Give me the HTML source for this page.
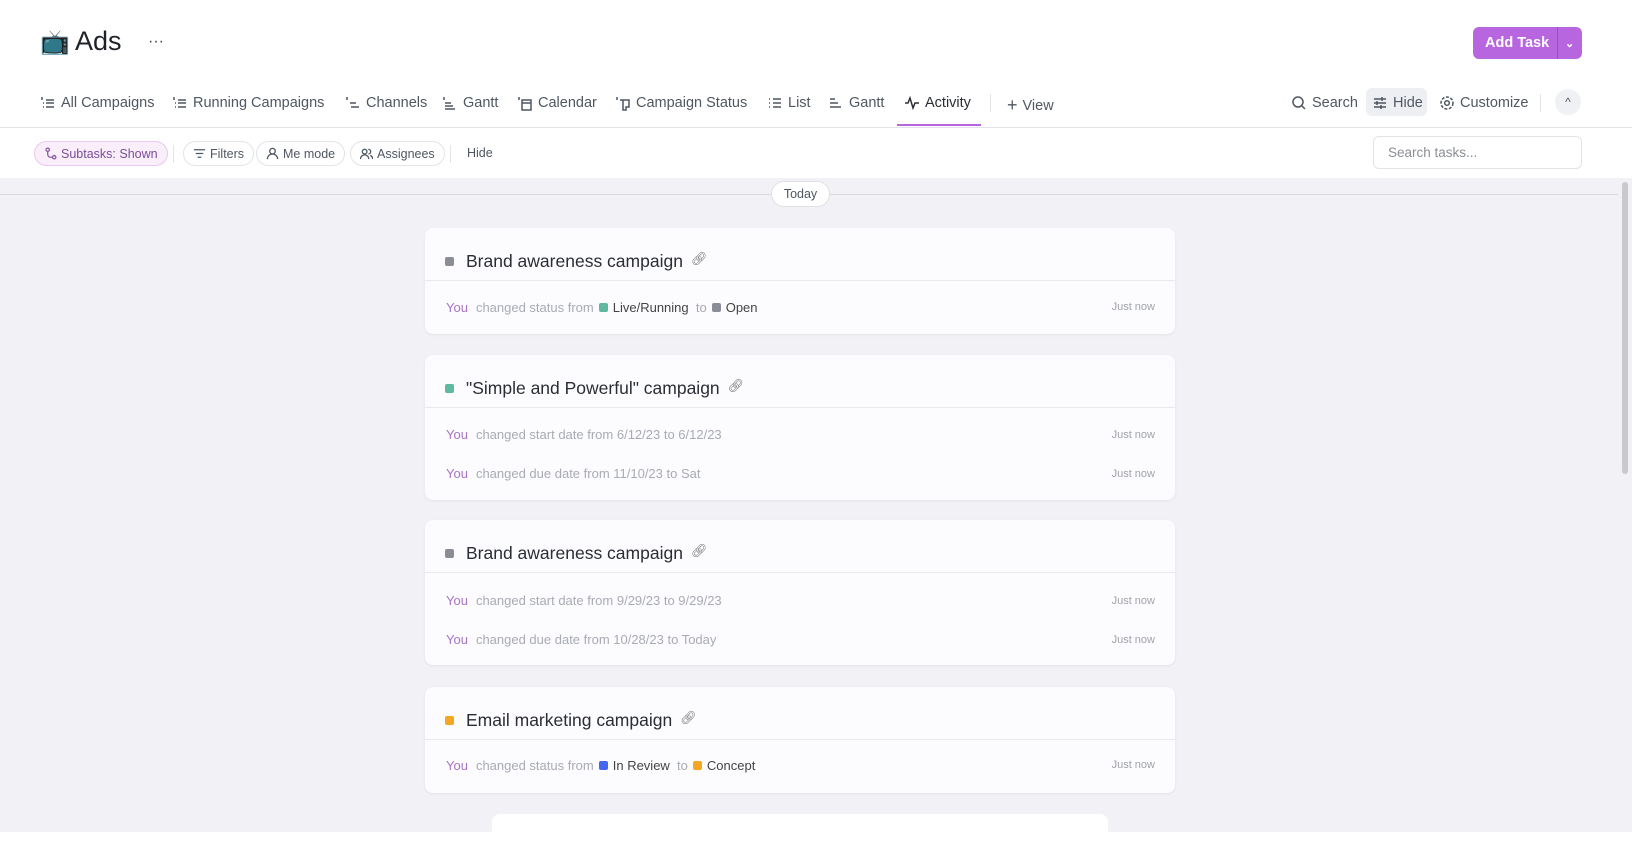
<!DOCTYPE html>
<html><head><meta charset="utf-8"><style>
*{box-sizing:border-box;margin:0;padding:0}
body{width:1632px;height:832px;overflow:hidden;background:#fff;font-family:"Liberation Sans",sans-serif;color:#2a2e34;position:relative}
.a{position:absolute;white-space:nowrap}
.tab{position:absolute;top:95px;font-size:14.5px;color:#4f5762;display:flex;align-items:center;gap:5px}
.tab svg{width:16px;height:16px;stroke:#4f5762;fill:none;stroke-width:1.5}
.chip{position:absolute;top:141px;height:25px;border:1px solid #e3e4e8;border-radius:13px;font-size:12.5px;color:#4f5762;display:flex;align-items:center;gap:4px;padding:0 9px}
.chip svg{width:13px;height:13px;stroke:#4f5762;fill:none;stroke-width:1.4}
.card{position:absolute;left:425px;width:750px;background:#fcfcfe;border-radius:8px;box-shadow:0 1px 3px rgba(0,0,0,.06)}
.hd{height:53px;border-bottom:1px solid #e8e9ee;display:flex;align-items:flex-start;padding-top:23px;padding-left:20px;font-size:17.5px;color:#2a2e34}
.sq{width:9px;height:9px;border-radius:2px;margin:6px 12px 0 0;display:inline-block}
.hd .lk{margin-left:8px;color:#777;font-size:13px}
.row{position:relative;height:39px;display:flex;align-items:center;padding-left:21px;font-size:13px;color:#a8abb3}
.row .y{color:#a875c4;margin-right:8px}
.row .t{position:absolute;right:20px;font-size:11px;color:#a0a3aa}
.row .s{color:#444;display:inline-flex;align-items:center}
.row .s i{width:9px;height:9px;border-radius:2px;display:inline-block;margin:0 5px 0 5px}
</style></head><body>
<div class="a" style="left:40px;top:28px;font-size:24px">📺</div>
<div class="a" style="left:75px;top:26px;font-size:27px;color:#1f2329">Ads</div>
<div class="a" style="left:148px;top:33px;font-size:16px;color:#444">···</div>
<div class="a" style="left:1473px;top:27px;width:109px;height:32px;background:#b866e0;border-radius:6px;color:#fff;font-size:14.5px;font-weight:bold;display:flex;align-items:center">
<span style="padding-left:12px;width:84px">Add Task</span><span style="border-left:1px solid #9c4fc4;height:100%;display:flex;align-items:center;padding-left:7px;font-size:11px">⌄</span></div>
<div class="tab" style="left:40px"><svg viewBox="0 0 16 16"><path d="M2 2v3M6 5h8M3 8h1M6 8h8M3 12h1M6 12h8"/></svg>All Campaigns</div>
<div class="tab" style="left:172px"><svg viewBox="0 0 16 16"><path d="M2 2v3M6 5h8M3 8h1M6 8h8M3 12h1M6 12h8"/></svg>Running Campaigns</div>
<div class="tab" style="left:345px"><svg viewBox="0 0 16 16"><path d="M2 2v3M5 8h6M6 12h8"/></svg>Channels</div>
<div class="tab" style="left:442px"><svg viewBox="0 0 16 16"><path d="M2 2v3M3 8h6M3 11h8M3 14h10"/></svg>Gantt</div>
<div class="tab" style="left:517px"><svg viewBox="0 0 16 16"><path d="M2 2v3M5 5h9v10H5zM5 8h9"/></svg>Calendar</div>
<div class="tab" style="left:615px"><svg viewBox="0 0 16 16"><path d="M2 2v3M5 5h9v7H11v3H8V5"/></svg>Campaign Status</div>
<div class="tab" style="left:767px"><svg viewBox="0 0 16 16"><path d="M2 4h1M6 4h8M2 8h1M6 8h8M2 12h1M6 12h8"/></svg>List</div>
<div class="tab" style="left:828px"><svg viewBox="0 0 16 16"><path d="M2 4h5M2 8h8M2 12h11"/></svg>Gantt</div>
<div class="tab" style="left:904px;color:#2a2e34"><svg viewBox="0 0 16 16" style="stroke:#2a2e34"><path d="M1 8h3l2-5 3 10 2-5h4"/></svg>Activity</div>
<div class="a" style="left:897px;top:124px;width:84px;height:2px;background:#b866e0"></div>
<div class="a" style="left:990px;top:94px;width:1px;height:18px;background:#e3e4e8"></div>
<div class="tab" style="left:1007px"><span style="font-size:18px;font-weight:300">+</span> View</div>
<div class="tab" style="left:1291px"><svg viewBox="0 0 16 16"><circle cx="7" cy="7" r="5"/><path d="M11 11l3 3"/></svg>Search</div>
<div class="a" style="left:1366px;top:88px;width:61px;height:28px;background:#eeeff3;border-radius:6px"></div>
<div class="tab" style="left:1372px"><svg viewBox="0 0 16 16"><path d="M2 4h12M2 8h12M2 12h12M10 2v4M5 6v4M9 10v4"/></svg>Hide</div>
<div class="tab" style="left:1439px"><svg viewBox="0 0 16 16"><circle cx="8" cy="8" r="2.3"/><circle cx="8" cy="8" r="6" stroke-dasharray="3 1.5"/></svg>Customize</div>
<div class="a" style="left:1540px;top:94px;width:1px;height:18px;background:#e3e4e8"></div>
<div class="a" style="left:1555px;top:89px;width:26px;height:26px;border-radius:13px;background:#f0f1f4;text-align:center;font-size:12px;line-height:26px;color:#555">^</div>
<div class="a" style="left:0;top:127px;width:1632px;height:1px;background:#e3e4e8"></div>
<div class="chip" style="left:34px;background:#faeefa;border-color:#e9c9ee;color:#7b4c98"><svg viewBox="0 0 14 14" style="stroke:#8b5aa8"><circle cx="4" cy="3" r="1.8"/><circle cx="11" cy="11" r="1.8"/><path d="M4 5v3a3 3 0 0 0 3 3h2"/></svg>Subtasks: Shown</div>
<div class="a" style="left:173px;top:145px;width:1px;height:18px;background:#e3e4e8"></div>
<div class="chip" style="left:183px"><svg viewBox="0 0 14 14"><path d="M1 3h12M3 7h8M5 11h4"/></svg>Filters</div>
<div class="chip" style="left:256px"><svg viewBox="0 0 14 14"><circle cx="7" cy="4.5" r="3"/><path d="M1.5 13a5.5 5.5 0 0 1 11 0"/></svg>Me mode</div>
<div class="chip" style="left:350px"><svg viewBox="0 0 14 14"><circle cx="5" cy="5" r="2.5"/><path d="M0.5 13a4.5 4.5 0 0 1 9 0M9 2.5a2.5 2.5 0 0 1 0 5M11 9a4 4 0 0 1 2.5 4"/></svg>Assignees</div>
<div class="a" style="left:450px;top:145px;width:1px;height:18px;background:#e3e4e8"></div>
<div class="a" style="left:467px;top:146px;font-size:12.5px;color:#4f5762">Hide</div>
<div class="a" style="left:1373px;top:136px;width:209px;height:33px;border:1px solid #e3e4e8;border-radius:6px;font-size:13.5px;color:#8a8e96;padding:8px 0 0 14px">Search tasks...</div>
<div class="a" style="left:0;top:178px;width:1632px;height:654px;background:#f2f2f6"></div>
<div class="a" style="left:0;top:194px;width:1618px;height:1px;background:#d8d9de"></div>
<div class="a" style="left:771px;top:181px;width:59px;height:26px;background:#fff;border:1px solid #e0e1e6;border-radius:13px;font-size:12.5px;color:#4f5762;text-align:center;line-height:24px">Today</div>
<div class="a" style="left:1622px;top:182px;width:6px;height:292px;background:#c9cace;border-radius:3px"></div>

<div class="card" style="top:228px;height:106px">
<div class="hd"><span class="sq" style="background:#8a8d96"></span>Brand awareness campaign<span class="lk">🔗︎</span></div>
<div class="row" style="height:52px"><span class="y">You</span>changed status from<span class="s"><i style="background:#5fb8a0"></i>Live/Running</span>&nbsp;&nbsp;to<span class="s"><i style="background:#8a8d96"></i>Open</span><span class="t">Just now</span></div>
</div>
<div class="card" style="top:355px;height:145px">
<div class="hd"><span class="sq" style="background:#5fb8a0"></span>"Simple and Powerful" campaign<span class="lk">🔗︎</span></div>
<div class="row" style="margin-top:7px"><span class="y">You</span>changed start date from 6/12/23 to 6/12/23<span class="t">Just now</span></div>
<div class="row"><span class="y">You</span>changed due date from 11/10/23 to Sat<span class="t">Just now</span></div>
</div>
<div class="card" style="top:520px;height:145px">
<div class="hd"><span class="sq" style="background:#8a8d96"></span>Brand awareness campaign<span class="lk">🔗︎</span></div>
<div class="row" style="margin-top:8px"><span class="y">You</span>changed start date from 9/29/23 to 9/29/23<span class="t">Just now</span></div>
<div class="row"><span class="y">You</span>changed due date from 10/28/23 to Today<span class="t">Just now</span></div>
</div>
<div class="card" style="top:687px;height:106px">
<div class="hd"><span class="sq" style="background:#f5a623"></span>Email marketing campaign<span class="lk">🔗︎</span></div>
<div class="row" style="height:50px"><span class="y">You</span>changed status from<span class="s"><i style="background:#4466f0"></i>In Review</span>&nbsp;&nbsp;to<span class="s"><i style="background:#f5a623"></i>Concept</span><span class="t">Just now</span></div>
</div>
<div class="a" style="left:492px;top:814px;width:616px;height:30px;background:#fff;border-radius:8px"></div>
</body></html>
